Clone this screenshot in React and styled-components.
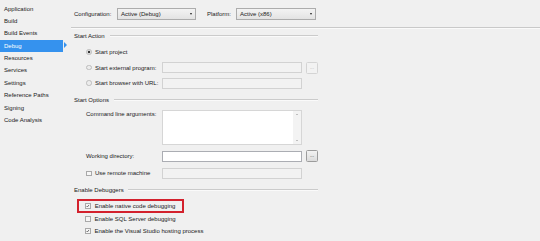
import React from 'react';
import styled, { createGlobalStyle, css } from 'styled-components';

const GlobalStyle = createGlobalStyle`
  html, body {
    margin: 0;
    padding: 0;
    background: #f0f0f0;
  }
  body {
    font-family: "Liberation Sans", Arial, sans-serif;
    font-size: 6px;
    color: #1a1a1a;
  }
`;

const navItems = [
  'Application',
  'Build',
  'Build Events',
  'Debug',
  'Resources',
  'Services',
  'Settings',
  'Reference Paths',
  'Signing',
  'Code Analysis',
];

const Page = styled.div`
  display: flex;
  width: 540px;
  height: 241px;
  overflow: hidden;
  background: #f0f0f0;
`;

const Sidebar = styled.nav`
  width: 63px;
  flex-shrink: 0;
  padding-top: 2.5px;
`;

const NavItem = styled.div`
  position: relative;
  height: 12.4px;
  line-height: 12.4px;
  padding-left: 4px;
  white-space: nowrap;
  ${({ $active }) =>
    $active &&
    css`
      background: #3592ee;
      color: #fff;
      &::after {
        content: '';
        position: absolute;
        right: -3.5px;
        top: 2.7px;
        border-top: 3.5px solid transparent;
        border-bottom: 3.5px solid transparent;
        border-left: 3.5px solid #3592ee;
      }
    `}
`;

const Main = styled.main`
  flex: 1;
  padding: 8px 0 0 11px;
`;

const ConfigRow = styled.div`
  display: flex;
  align-items: center;
  height: 12px;
`;

const ConfigLabel = styled.span`
  width: ${({ $w }) => $w}px;
  white-space: nowrap;
`;

const Select = styled.div`
  position: relative;
  box-sizing: border-box;
  width: ${({ $w }) => $w}px;
  height: 12px;
  line-height: 10px;
  padding-left: 3px;
  border: 1px solid #acacac;
  background: linear-gradient(#f3f3f3, #e3e3e3);
  color: #1a1a1a;
  margin-right: ${({ $mr }) => $mr || 0}px;
  &::after {
    content: '';
    position: absolute;
    right: 3px;
    top: 4px;
    border-left: 1.6px solid transparent;
    border-right: 1.6px solid transparent;
    border-top: 2px solid #222;
  }
`;

const Divider = styled.div`
  height: 1px;
  margin: 6.5px 0 0 -3px;
  background: #c9c9c9;
  border-bottom: 1px solid #fafafa;
`;

const Body = styled.div`
  width: 244px;
`;

const SectionHeader = styled.div`
  display: flex;
  align-items: center;
  height: 10px;
  margin-top: ${({ $mt }) => $mt}px;
  white-space: nowrap;
  &::after {
    content: '';
    flex: 1;
    height: 1px;
    margin-left: ${({ $gap }) => $gap}px;
    background: #cbcbcb;
    border-bottom: 1px solid #fafafa;
  }
`;

const FormGrid = styled.div`
  display: grid;
  grid-template-columns: 72px 140px 12px;
  column-gap: 4px;
  row-gap: ${({ $gap }) => $gap}px;
  margin: ${({ $mt }) => $mt}px 0 0 12px;
  align-items: center;
`;

const FieldLabel = styled.div`
  display: flex;
  align-items: center;
  gap: 3.5px;
  height: 12px;
  white-space: nowrap;
  grid-column: 1;
  ${({ $top }) =>
    $top &&
    css`
      align-self: start;
      height: 8px;
    `}
`;

const Radio = styled.span`
  box-sizing: border-box;
  width: 5.5px;
  height: 5.5px;
  border-radius: 50%;
  border: 1px solid #bdbdbd;
  background: ${({ $checked }) =>
    $checked ? 'radial-gradient(circle, #333 0 1.4px, #e8e8e8 1.6px)' : '#ececec'};
  flex-shrink: 0;
`;

const Check = styled.span`
  box-sizing: border-box;
  display: inline-flex;
  align-items: center;
  justify-content: center;
  width: 5.5px;
  height: 5.5px;
  border: 1px solid #a9a9a9;
  background: #f6f6f6;
  flex-shrink: 0;
  svg {
    width: 4px;
    height: 4px;
  }
`;

const Input = styled.div`
  box-sizing: border-box;
  grid-column: 2;
  height: ${({ $h }) => $h || 11}px;
  border: 1px solid ${({ $disabled }) => ($disabled ? '#d2d2d2' : '#abadb3')};
  background: ${({ $disabled }) => ($disabled ? '#f2f2f2' : '#fff')};
`;

const TextArea = styled.div`
  box-sizing: border-box;
  grid-column: 2;
  height: 35px;
  display: flex;
  border: 1px solid #d6d6d6;
  background: #fff;
`;

const ScrollTrack = styled.div`
  margin-left: auto;
  width: 8px;
  display: flex;
  flex-direction: column;
  justify-content: space-between;
  align-items: center;
  padding: 3px 0;
  background: #f3f3f3;
  &::before,
  &::after {
    content: '';
    border-left: 1.3px solid transparent;
    border-right: 1.3px solid transparent;
  }
  &::before {
    border-bottom: 1.6px solid #8a8a8a;
  }
  &::after {
    border-top: 1.6px solid #8a8a8a;
  }
`;

const DotsButton = styled.div`
  box-sizing: border-box;
  grid-column: 3;
  height: 12px;
  display: flex;
  align-items: center;
  justify-content: center;
  font-size: 5px;
  line-height: 1;
  padding-bottom: 1px;
  border: 1px solid ${({ $disabled }) => ($disabled ? '#d4d4d4' : '#9c9c9c')};
  border-radius: 1.5px;
  color: ${({ $disabled }) => ($disabled ? '#b0b0b0' : '#333')};
  background: ${({ $disabled }) =>
    $disabled ? '#f2f2f2' : 'linear-gradient(#f2f2f2, #dcdcdc)'};
`;

const DebuggerList = styled.div`
  display: flex;
  flex-direction: column;
  margin-top: 4.4px;
`;

const Highlight = styled.div`
  box-sizing: border-box;
  width: 107.6px;
  height: 13.4px;
  margin-left: 2.7px;
  border: 2px solid #d3212d;
  display: flex;
  align-items: center;
  padding-left: 6.5px;
`;

const CheckItem = styled.div`
  display: flex;
  align-items: center;
  gap: 4px;
  height: ${({ $h }) => $h || 11.7}px;
  padding-left: ${({ $pl }) => ($pl === undefined ? 11 : $pl)}px;
  white-space: nowrap;
`;

const Tick = () => (
  <svg viewBox="0 0 8 8">
    <path d="M1.2 4.2 L3.2 6.2 L6.8 1.6" fill="none" stroke="#333" strokeWidth="1.5" />
  </svg>
);

const CheckBox = ({ checked }) => <Check>{checked && <Tick />}</Check>;

const App = () => {
  return (
    <>
      <GlobalStyle />
      <Page>
        <Sidebar>
          {navItems.map((item) => (
            <NavItem key={item} $active={item === 'Debug'}>
              {item}
            </NavItem>
          ))}
        </Sidebar>
        <Main>
          <ConfigRow>
            <ConfigLabel $w={43}>Configuration:</ConfigLabel>
            <Select $w={79} $mr={11}>Active (Debug)</Select>
            <ConfigLabel $w={29}>Platform:</ConfigLabel>
            <Select $w={80}>Active (x86)</Select>
          </ConfigRow>
          <Divider />
          <Body>
            <SectionHeader $mt={2} $gap={5}>Start Action</SectionHeader>
            <FormGrid $mt={5.5} $gap={3.5}>
              <FieldLabel>
                <Radio $checked />
                Start project
              </FieldLabel>
              <FieldLabel>
                <Radio />
                Start external program:
              </FieldLabel>
              <Input $disabled />
              <DotsButton $disabled>...</DotsButton>
              <FieldLabel>
                <Radio />
                Start browser with URL:
              </FieldLabel>
              <Input $disabled />
            </FormGrid>
            <SectionHeader $mt={5.8} $gap={5}>Start Options</SectionHeader>
            <FormGrid $mt={5.5} $gap={5}>
              <FieldLabel $top>Command line arguments:</FieldLabel>
              <TextArea>
                <ScrollTrack />
              </TextArea>
              <FieldLabel>Working directory:</FieldLabel>
              <Input />
              <DotsButton>...</DotsButton>
              <FieldLabel>
                <CheckBox />
                Use remote machine
              </FieldLabel>
              <Input $disabled />
            </FormGrid>
            <SectionHeader $mt={5.8} $gap={4}>Enable Debuggers</SectionHeader>
            <DebuggerList>
              <Highlight>
                <CheckItem $pl={0} $h={9}>
                  <CheckBox checked />
                  Enable native code debugging
                </CheckItem>
              </Highlight>
              <CheckItem $h={12.5}>
                <CheckBox />
                Enable SQL Server debugging
              </CheckItem>
              <CheckItem>
                <CheckBox checked />
                Enable the Visual Studio hosting process
              </CheckItem>
            </DebuggerList>
          </Body>
        </Main>
      </Page>
    </>
  );
};

export default App;
